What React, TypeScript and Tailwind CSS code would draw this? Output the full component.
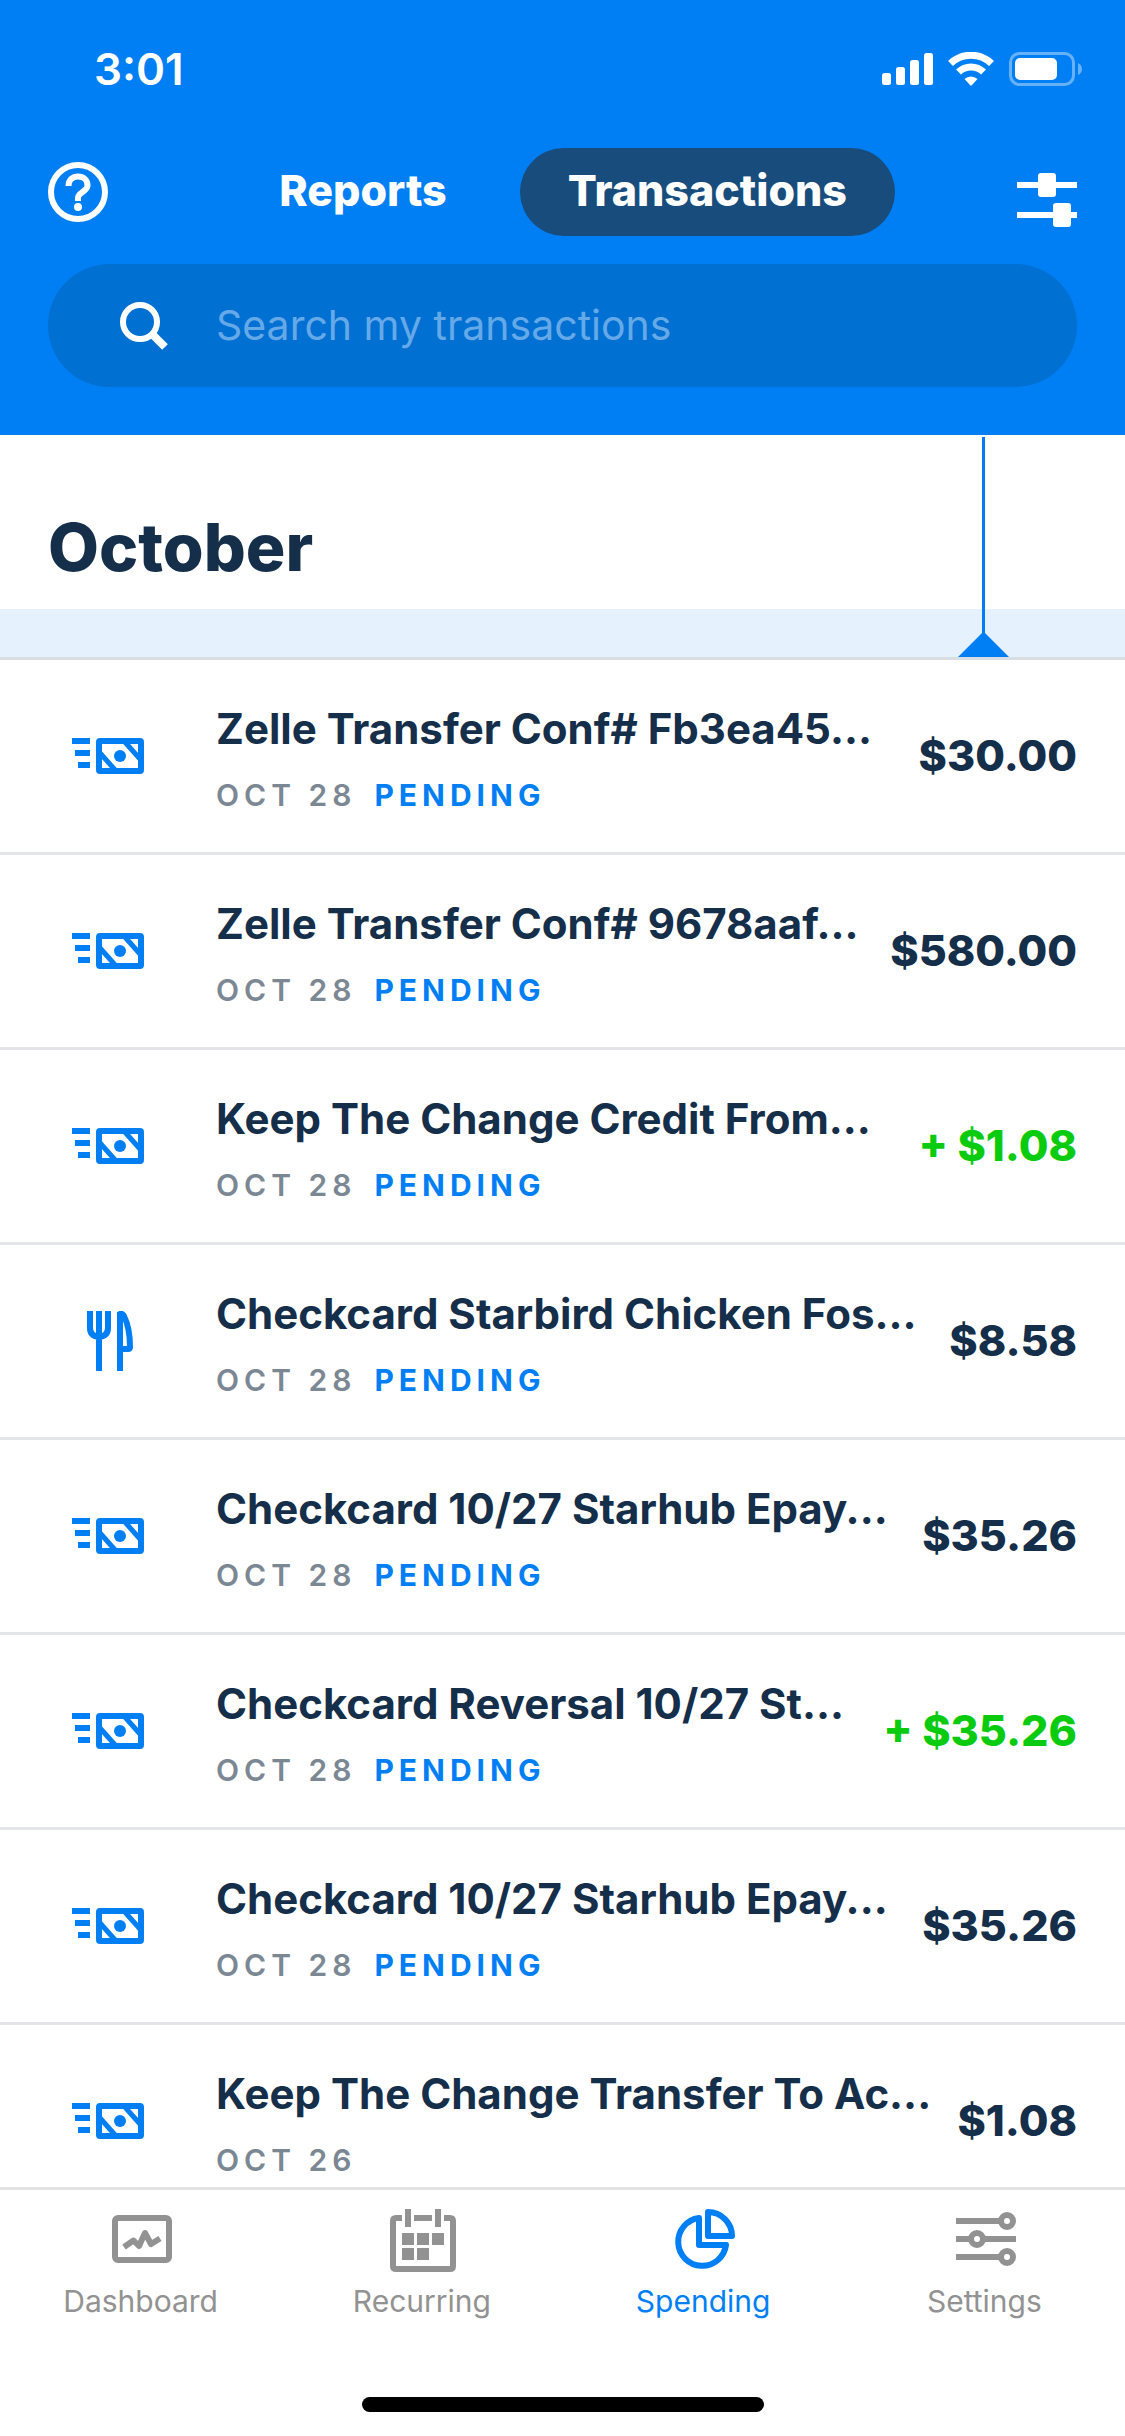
import React from "react";

type IconName = "transfer" | "dining";

type Transaction = {
  icon: IconName;
  title: string;
  date: string;
  pending: boolean;
  amount: string;
  credit?: boolean;
};

const transactions: Transaction[] = [
  { icon: "transfer", title: "Zelle Transfer Conf# Fb3ea45...", date: "Oct 28", pending: true, amount: "$30.00" },
  { icon: "transfer", title: "Zelle Transfer Conf# 9678aaf...", date: "Oct 28", pending: true, amount: "$580.00" },
  { icon: "transfer", title: "Keep The Change Credit From...", date: "Oct 28", pending: true, amount: "+ $1.08", credit: true },
  { icon: "dining", title: "Checkcard Starbird Chicken Fos...", date: "Oct 28", pending: true, amount: "$8.58" },
  { icon: "transfer", title: "Checkcard 10/27 Starhub Epay...", date: "Oct 28", pending: true, amount: "$35.26" },
  { icon: "transfer", title: "Checkcard Reversal 10/27 St...", date: "Oct 28", pending: true, amount: "+ $35.26", credit: true },
  { icon: "transfer", title: "Checkcard 10/27 Starhub Epay...", date: "Oct 28", pending: true, amount: "$35.26" },
  { icon: "transfer", title: "Keep The Change Transfer To Ac...", date: "Oct 26", pending: false, amount: "$1.08" },
];

function StatusIcons() {
  return (
    <svg className="h-9 w-[200px]" viewBox="0 0 200 36" fill="#fff" aria-hidden="true">
      <rect x="0" y="21" width="9" height="12" rx="2.5" />
      <rect x="14" y="15" width="9" height="18" rx="2.5" />
      <rect x="28" y="8" width="9" height="25" rx="2.5" />
      <rect x="42" y="1" width="9" height="32" rx="2.5" />
      <g fill="none" stroke="#fff" strokeWidth="7">
        <path d="M68.5 11.5a29.5 29.5 0 0 1 41 0" />
        <path d="M76.5 20a18 18 0 0 1 25 0" />
      </g>
      <path d="M82.500 27a9.500 9.500 0 0 1 13 0l-5.500 6q-1 1-2 0z" />
      <rect x="128.500" y="1.500" width="63" height="31" rx="9" fill="none" stroke="#66b2f9" strokeWidth="3" />
      <rect x="133" y="6" width="42" height="22" rx="5" />
      <path d="M196 11q4 2 4 6t-4 6z" fill="#66b2f9" />
    </svg>
  );
}

function HelpIcon() {
  return (
    <svg className="size-[60px]" viewBox="0 0 60 60" fill="none" stroke="#fff" strokeWidth="6" aria-hidden="true">
      <circle cx="30" cy="30" r="27" />
      <path d="M20.500 24c0-6 4-9.500 9.500-9.500s9.500 3.500 9.500 9c0 6-9.500 7-9.500 12.500V39" strokeWidth="6" />
      <circle cx="30" cy="45" r="4" fill="#fff" stroke="none" />
    </svg>
  );
}

function FilterIcon() {
  return (
    <svg className="h-[72px] w-[60px]" viewBox="0 0 60 72" fill="#fff" aria-hidden="true">
      <rect x="0" y="26" width="60" height="6" />
      <rect x="21" y="17" width="18" height="24" rx="3" />
      <rect x="0" y="56" width="60" height="6" />
      <rect x="36" y="47" width="18" height="24" rx="3" />
    </svg>
  );
}

function SearchIcon() {
  return (
    <svg className="size-12 shrink-0" viewBox="0 0 48 48" fill="none" stroke="#fff" strokeWidth="6" aria-hidden="true">
      <circle cx="20" cy="20" r="17" />
      <path d="M31 31 45 45" strokeWidth="8" />
    </svg>
  );
}

function TransferIcon() {
  return (
    <svg className="h-9 w-[72px] shrink-0" viewBox="0 0 72 36" fill="#007ff5" aria-hidden="true">
      <rect x="0" y="0" width="18" height="6" />
      <rect x="3" y="12" width="15" height="6" />
      <rect x="6" y="24" width="12" height="6" />
      <rect x="27" y="3" width="42" height="30" rx="1" fill="none" stroke="#007ff5" strokeWidth="6" />
      <circle cx="48" cy="18" r="6" />
      <path d="M28 15 44 33M52 3 68 21" stroke="#007ff5" strokeWidth="5" />
    </svg>
  );
}

function DiningIcon() {
  return (
    <svg className="h-[60px] w-[72px] shrink-0" viewBox="0 0 72 60" fill="none" stroke="#007ff5" strokeWidth="6" aria-hidden="true">
      <path d="M18 0V17q0 8 9 9 9-1 9-9V0M27 0V60" />
      <path d="M48 60V3q2-1 4 2 6 12 6 31 0 2-2 2H48" />
    </svg>
  );
}

function DashboardIcon() {
  return (
    <svg className="size-[72px]" viewBox="-1 0 72 72" fill="none" stroke="currentColor" strokeWidth="6" aria-hidden="true">
      <rect x="9" y="15" width="54" height="42" rx="3" />
      <path d="M18 44 27.500 37.500 33 43 39 30 45 41 54 35.500" strokeLinejoin="round" />
    </svg>
  );
}

function CalendarIcon() {
  return (
    <svg className="size-[72px]" viewBox="-1 0 72 72" fill="currentColor" aria-hidden="true">
      <path d="M15 15H9q-3 0-3 3V63q0 3 3 3H63q3 0 3-3V18q0-3-3-3H57" fill="none" stroke="currentColor" strokeWidth="6" />
      <rect x="27" y="12" width="18" height="6" />
      <rect x="18" y="6" width="6" height="18" />
      <rect x="48" y="6" width="6" height="18" />
      <rect x="15" y="30" width="12" height="12" />
      <rect x="30" y="30" width="12" height="12" />
      <rect x="45" y="30" width="12" height="12" />
      <rect x="15" y="45" width="12" height="12" />
      <rect x="30" y="45" width="12" height="12" />
    </svg>
  );
}

function PieIcon() {
  return (
    <svg className="size-[72px]" viewBox="-2 0 72 72" fill="none" stroke="currentColor" strokeWidth="6" strokeLinejoin="round" aria-hidden="true">
      <path d="M30 15A24 24 0 1 0 57 42H30Z" />
      <path d="M39 9V33H63A24 24 0 0 0 39 9Z" />
    </svg>
  );
}

function SlidersIcon() {
  return (
    <svg className="size-[72px]" viewBox="-2 0 72 72" fill="none" stroke="currentColor" strokeWidth="6" aria-hidden="true">
      <path d="M6 18H51M6 36H21M33 36H66M6 54H51" />
      <circle cx="57" cy="18" r="6" />
      <circle cx="27" cy="36" r="6" />
      <circle cx="57" cy="54" r="6" />
    </svg>
  );
}

const tabs = [
  { label: "Dashboard", Icon: DashboardIcon, active: false },
  { label: "Recurring", Icon: CalendarIcon, active: false },
  { label: "Spending", Icon: PieIcon, active: true },
  { label: "Settings", Icon: SlidersIcon, active: false },
];

function TransactionRow({ item }: { item: Transaction }) {
  return (
    <li className="flex h-[195px] items-center border-b-[3px] border-[#e4e5e9] pr-12 pl-[72px]">
      {item.icon === "transfer" ? <TransferIcon /> : <DiningIcon />}
      <div className="ml-[72px] flex flex-col gap-[18px] whitespace-nowrap">
        <h2 className="text-[42px] leading-[60px] font-bold">{item.title}</h2>
        <p className="flex gap-[18px] text-[30px] leading-9 tracking-[5px] uppercase">
          <span className="font-semibold text-[#7b8793]">{item.date}</span>
          {item.pending && <span className="font-bold text-[#007ff5]">Pending</span>}
        </p>
      </div>
      <span
        className={
          item.credit
            ? "ml-auto pb-0.5 text-[43px] font-extrabold whitespace-nowrap text-[#0acb10]"
            : "ml-auto pb-0.5 text-[43px] font-extrabold whitespace-nowrap"
        }
      >
        {item.amount}
      </span>
    </li>
  );
}

export default function App() {
  return (
    <div className="flex h-screen flex-col bg-white font-['Inter',sans-serif] text-[#152e4a]">
      <header className="bg-[#007ff5] px-12 pb-12 text-white">
        <div className="flex h-[148px] items-start justify-between pt-[42px] pl-[46px]">
          <time className="text-[44px] leading-[54px] font-semibold">3:01</time>
          <div className="-mr-[5px] pt-[10px]">
            <StatusIcons />
          </div>
        </div>
        <div className="flex h-[88px] items-center">
          <button type="button" aria-label="Help">
            <HelpIcon />
          </button>
          <nav className="mr-[122px] ml-auto flex h-full gap-[25px] text-[43px] font-extrabold" aria-label="Spending views">
            <button type="button" className="h-full rounded-full px-12 pb-1">
              Reports
            </button>
            <button type="button" className="h-full rounded-full bg-[#184c7d] px-12 pb-1">
              Transactions
            </button>
          </nav>
          <button type="button" aria-label="Filter transactions">
            <FilterIcon />
          </button>
        </div>
        <label className="mt-7 flex h-[123px] items-center gap-12 rounded-full bg-[#0070d2] px-[72px]">
          <SearchIcon />
          <input
            type="search"
            aria-label="Search my transactions"
            placeholder="Search my transactions"
            className="h-full min-w-0 flex-1 bg-transparent pb-0.5 text-[41px] outline-none placeholder:text-[#66a9e9]"
          />
        </label>
      </header>

      <main className="min-h-0 flex-1 overflow-hidden">
        <div className="relative border-b-[3px] border-[#d9dee5]">
          <h1 className="flex h-[174px] items-end px-12 pb-5 text-[66px] leading-[84px] font-extrabold">October</h1>
          <div className="h-12 bg-[#e6f1fe]" />
          <svg className="absolute top-0 right-[116px] h-full w-[51px]" viewBox="0 0 51 222" aria-hidden="true">
            <path d="M25.500 2V200" stroke="#007ff5" strokeWidth="3" />
            <path d="M0 222 25.500 196.500 51 222Z" fill="#007ff5" />
          </svg>
        </div>
        <ul>
          {transactions.map((item, index) => (
            <TransactionRow key={index} item={item} />
          ))}
        </ul>
      </main>

      <footer className="border-t-[3px] border-[#e2e2e2] bg-white">
        <nav className="grid grid-cols-4 pt-[13px]" aria-label="Main">
          {tabs.map(({ label, Icon, active }) => (
            <a
              key={label}
              href="#"
              aria-current={active ? "page" : undefined}
              className={
                active
                  ? "flex flex-col items-center gap-2 text-[#007ff5]"
                  : "flex flex-col items-center gap-2 text-[#929292]"
              }
            >
              <Icon />
              <span className="text-[30px] leading-9">{label}</span>
            </a>
          ))}
        </nav>
        <div className="mx-auto mt-[78px] mb-6 h-[15px] w-[402px] rounded-full bg-black" />
      </footer>
    </div>
  );
}
